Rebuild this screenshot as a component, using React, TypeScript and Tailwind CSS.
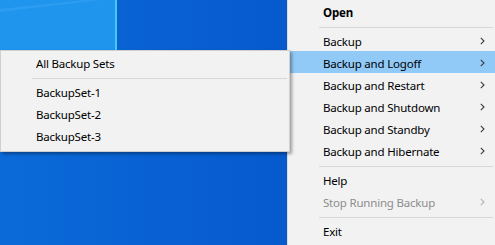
import React from 'react';

type Item =
  | { kind: 'sep' }
  | { kind: 'item'; label: string; sub?: boolean; bold?: boolean; active?: boolean; disabled?: boolean };

const mainItems: Item[] = [
  { kind: 'item', label: 'Open', bold: true },
  { kind: 'sep' },
  { kind: 'item', label: 'Backup', sub: true },
  { kind: 'item', label: 'Backup and Logoff', sub: true, active: true },
  { kind: 'item', label: 'Backup and Restart', sub: true },
  { kind: 'item', label: 'Backup and Shutdown', sub: true },
  { kind: 'item', label: 'Backup and Standby', sub: true },
  { kind: 'item', label: 'Backup and Hibernate', sub: true },
  { kind: 'sep' },
  { kind: 'item', label: 'Help' },
  { kind: 'item', label: 'Stop Running Backup', sub: true, disabled: true },
  { kind: 'sep' },
  { kind: 'item', label: 'Exit' },
];

const subItems: Item[] = [
  { kind: 'item', label: 'All Backup Sets' },
  { kind: 'sep' },
  { kind: 'item', label: 'BackupSet-1' },
  { kind: 'item', label: 'BackupSet-2' },
  { kind: 'item', label: 'BackupSet-3' },
];

function Chevron({ disabled }: { disabled?: boolean }) {
  return (
    <svg width="5" height="8" viewBox="0 0 5 8" className="shrink-0 mt-[2px]">
      <polyline
        points="0.8,0.8 4,4 0.8,7.2"
        fill="none"
        stroke={disabled ? '#b4b4b4' : '#3c3c3c'}
        strokeWidth="1.1"
      />
    </svg>
  );
}

function MenuList({ items }: { items: Item[] }) {
  return (
    <>
      {items.map((it, i) =>
        it.kind === 'sep' ? (
          <div key={i} className="pl-[31px] pr-[2px] pt-[5px] pb-[1px]">
            <div className="h-px bg-[#d7d7d7]" />
          </div>
        ) : (
          <div
            key={i}
            className={`flex items-center h-[22px] pl-[35px] pr-[10px] ${it.active ? 'bg-[#91c9f7]' : ''}`}
          >
            <span
              className={`flex-1 whitespace-nowrap pt-[3px] ${it.bold ? 'font-bold' : ''} ${it.disabled ? 'text-[#8d8d8d]' : 'text-black'}`}
            >
              {it.label}
            </span>
            {it.sub && <Chevron disabled={it.disabled} />}
          </div>
        )
      )}
    </>
  );
}

export default function App() {
  return (
    <div className="relative w-[495px] h-[245px] overflow-hidden bg-[#0760d6] font-['Noto_Sans',sans-serif] text-[11.5px] tracking-[-0.2px] leading-none">
      {/* desktop wallpaper */}
      <svg className="absolute inset-0" width="495" height="245" viewBox="0 0 495 245">
        <defs>
          <linearGradient id="wall" x1="0" y1="0" x2="1" y2="0">
            <stop offset="0" stopColor="#0b6ad8" />
            <stop offset="1" stopColor="#034ec6" />
          </linearGradient>
        </defs>
        <rect width="495" height="245" fill="url(#wall)" />
        <rect x="0" y="0" width="115" height="50" fill="#1f95ee" />
        <polygon points="0,9 85,0 100,0 0,12" fill="#3aa6f3" opacity="0.5" />
        <rect x="115" y="0" width="2" height="50" fill="#46c8f8" />
      </svg>

      {/* main tray menu */}
      <div className="absolute left-[287px] top-0 w-[208px] h-[245px] bg-[#f2f2f2] border-l border-[#dcdcdc]">
        <MenuList items={mainItems} />
      </div>

      {/* submenu */}
      <div className="absolute left-0 top-[50px] w-[290px] bg-[#f2f2f2] border border-[#cfcfcf] pb-[5px] shadow-[2px_2px_3px_rgba(0,0,0,0.35)]">
        <MenuList items={subItems} />
      </div>
    </div>
  );
}
